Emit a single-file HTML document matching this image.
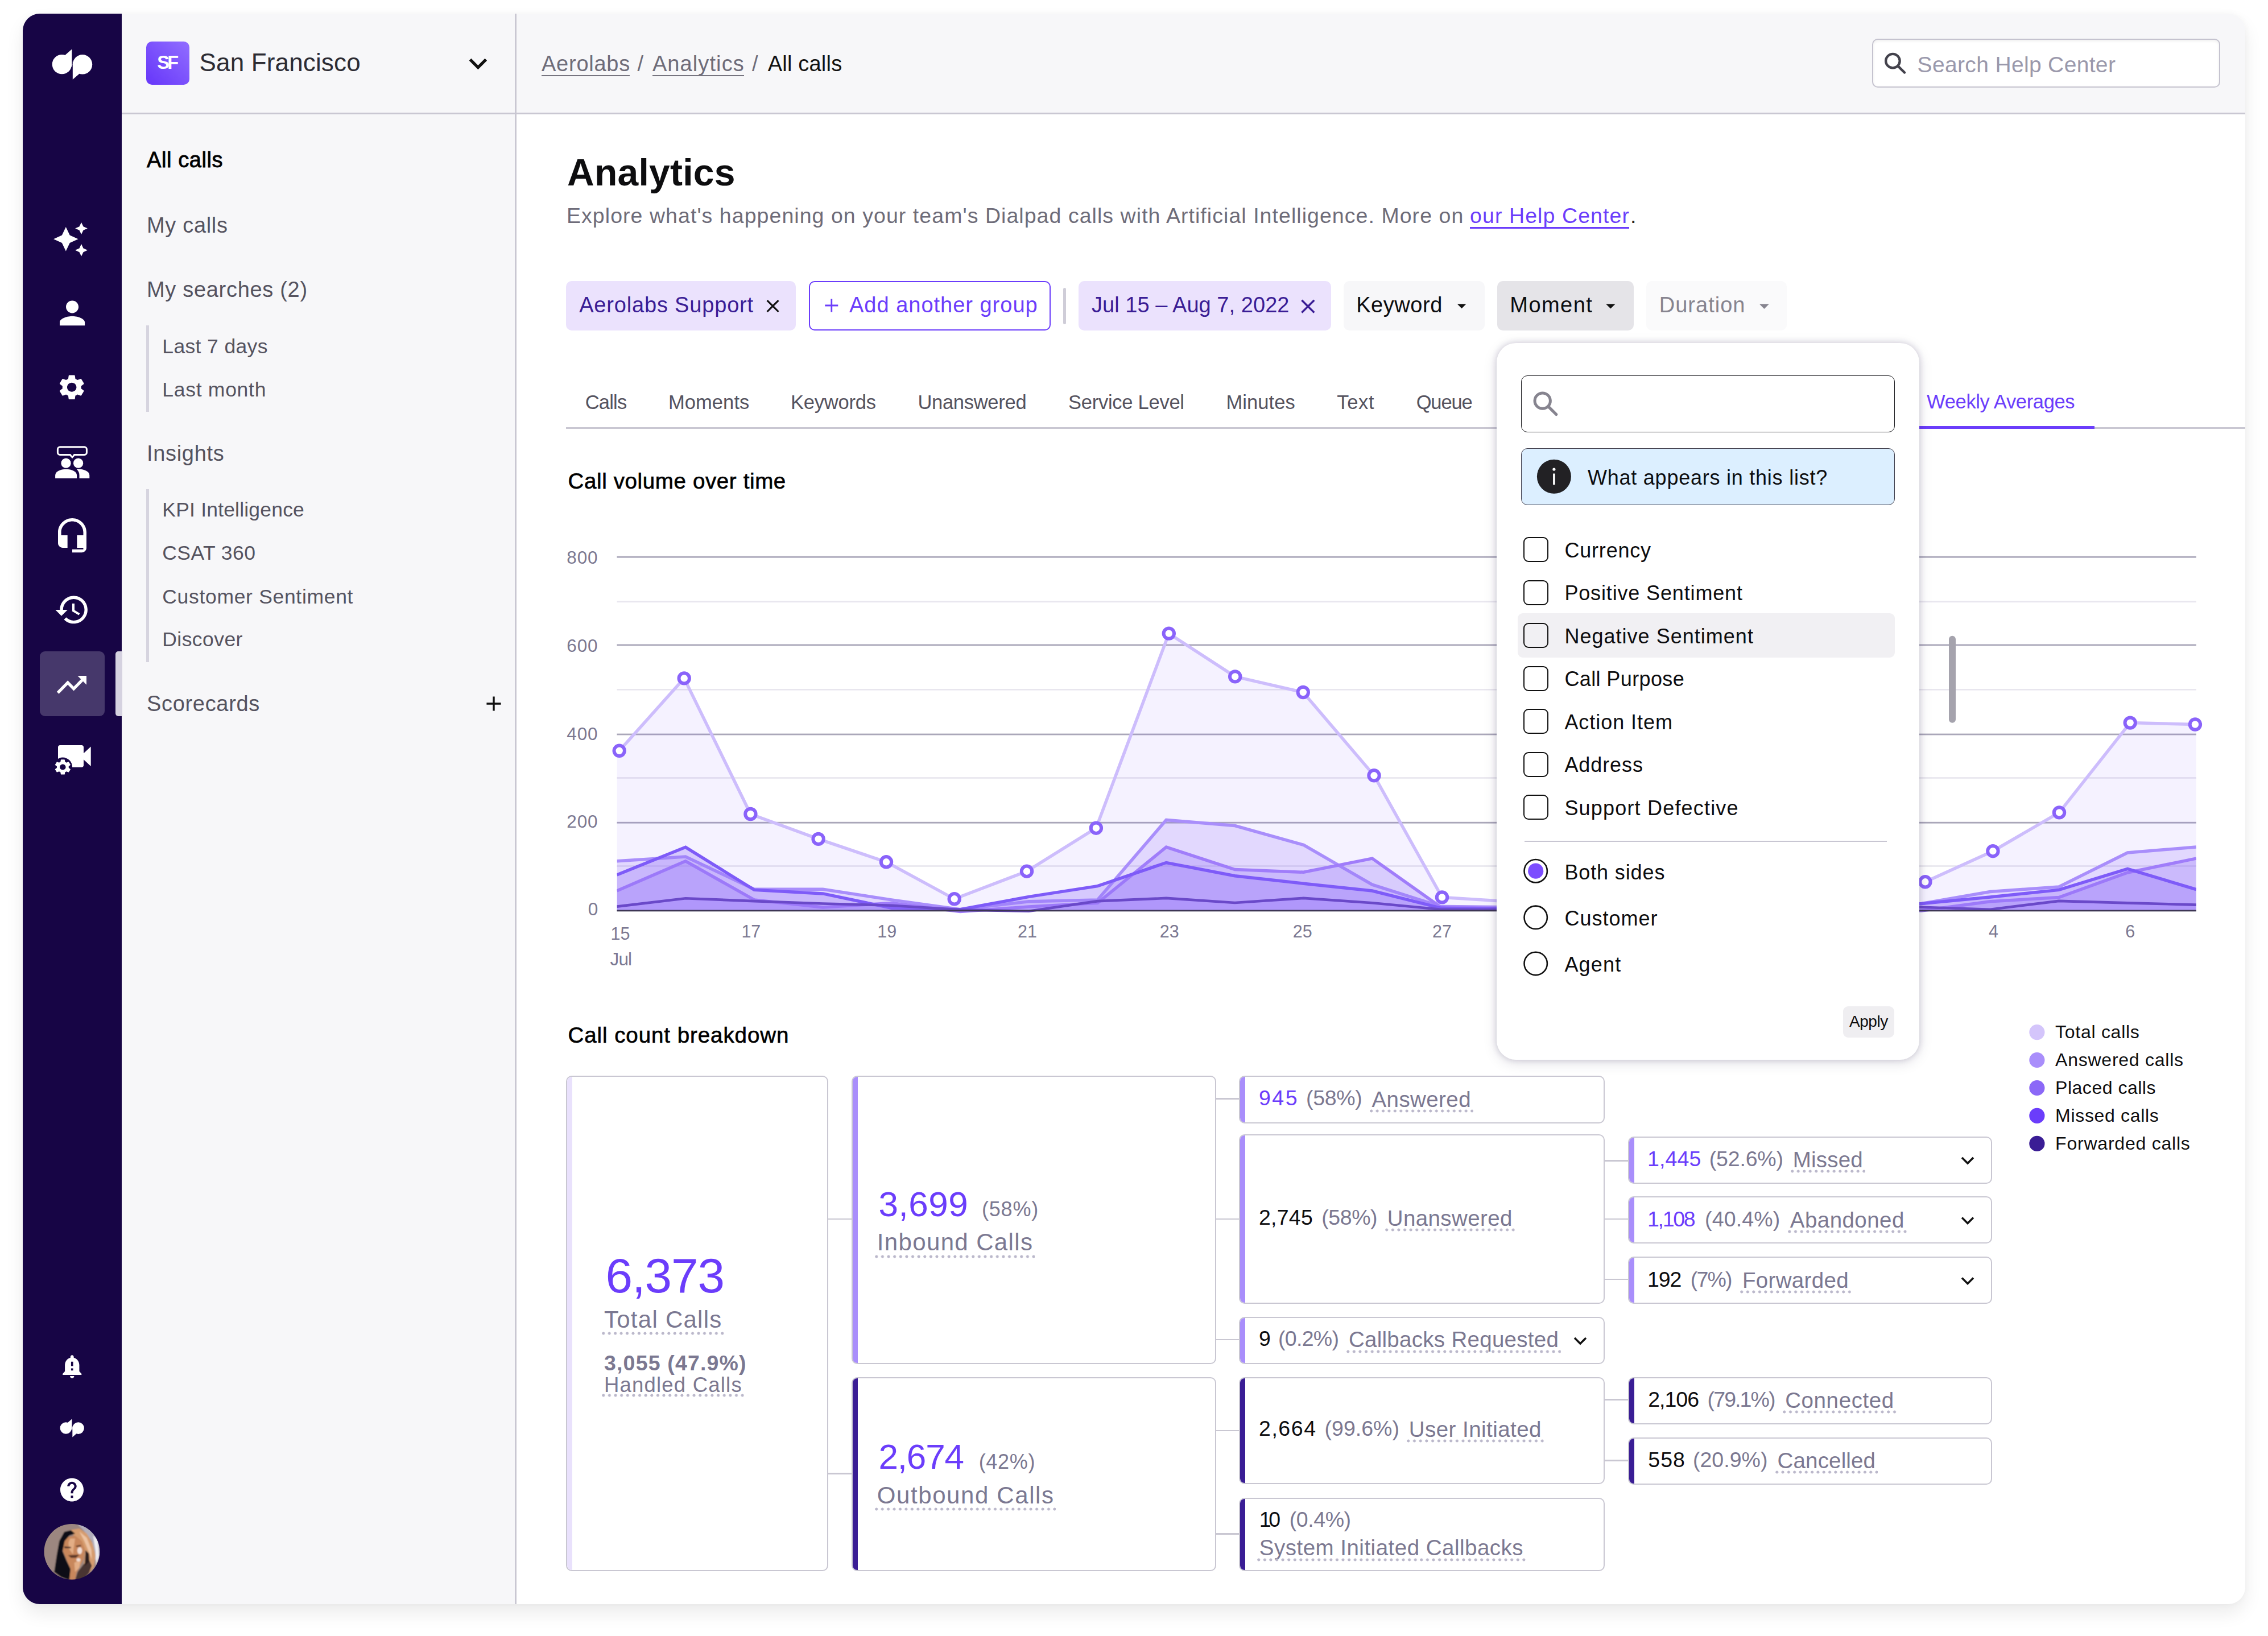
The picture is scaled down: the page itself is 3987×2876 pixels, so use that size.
<!DOCTYPE html>
<html><head><meta charset="utf-8"><title>Analytics</title>
<style>
html,body{margin:0;padding:0}
body{width:3987px;height:2876px;position:relative;overflow:hidden;background:#fff;font-family:"Liberation Sans", sans-serif;}

</style></head><body>
<div style="position:absolute;left:40px;top:24px;width:3907px;height:2796px;border-radius:30px;box-shadow:0 16px 32px rgba(0,0,0,.08),0 0 12px rgba(0,0,0,.035);background:#fff"></div>
<div id="win" style="position:absolute;left:0;top:0;width:3987px;height:2876px;clip-path:inset(24px 40px 56px 40px round 30px)">
<div style="position:absolute;left:40.0px;top:24.0px;width:174.0px;height:2796.0px;background:#170545"></div>
<div style="position:absolute;left:214.0px;top:24.0px;width:692.0px;height:2796.0px;background:#f7f7f9"></div>
<div style="position:absolute;left:906.0px;top:24.0px;width:3041.0px;height:175.0px;background:#f7f7f9"></div>
<div style="position:absolute;left:214.0px;top:198.2px;width:3733.0px;height:2.5px;background:#c9c7d2"></div>
<div style="position:absolute;left:905.4px;top:24.0px;width:2.5px;height:2796.0px;background:#c9c7d2"></div>
<div style="position:absolute;left:70.2px;top:1144.6px;width:113.6px;height:114.5px;background:#46386b;border-radius:9px"></div>
<div style="position:absolute;left:202.5px;top:1144.6px;width:12.0px;height:114.5px;background:#d5d2e0;border-radius:5px 0 0 5px"></div>
<div style="position:absolute;left:257.0px;top:73.2px;width:75.9px;height:75.8px;border-radius:10px;background:linear-gradient(45deg,#6a3bfa 10%,#8f6bff 95%)"></div>
<span style="position:absolute;left:276.2px;top:93.8px;font-size:32.5px;line-height:32.5px;white-space:pre;color:#fff;font-weight:700;letter-spacing:-3.73px;">SF</span>
<span style="position:absolute;left:350.5px;top:87.6px;font-size:44px;line-height:44px;white-space:pre;color:#2c2b33;letter-spacing:0.16px;">San Francisco</span>
<span style="position:absolute;left:258.0px;top:262.3px;font-size:38px;line-height:38px;white-space:pre;color:#000;letter-spacing:0.59px;-webkit-text-stroke:0.85px #000;">All calls</span>
<span style="position:absolute;left:258.0px;top:376.5px;font-size:38px;line-height:38px;white-space:pre;color:#55535f;letter-spacing:0.68px;">My calls</span>
<span style="position:absolute;left:258.0px;top:490.3px;font-size:38px;line-height:38px;white-space:pre;color:#55535f;letter-spacing:0.69px;">My searches (2)</span>
<div style="position:absolute;left:257.2px;top:572.3px;width:5.2px;height:152.0px;background:#d6d4df"></div>
<span style="position:absolute;left:285.3px;top:591.6px;font-size:35.5px;line-height:35.5px;white-space:pre;color:#55535f;letter-spacing:0.36px;">Last 7 days</span>
<span style="position:absolute;left:285.3px;top:667.9px;font-size:35.5px;line-height:35.5px;white-space:pre;color:#55535f;letter-spacing:0.72px;">Last month</span>
<span style="position:absolute;left:258.0px;top:778.0px;font-size:38px;line-height:38px;white-space:pre;color:#55535f;letter-spacing:0.68px;">Insights</span>
<div style="position:absolute;left:257.2px;top:860.0px;width:5.2px;height:303.8px;background:#d6d4df"></div>
<span style="position:absolute;left:285.3px;top:879.3px;font-size:35.5px;line-height:35.5px;white-space:pre;color:#55535f;letter-spacing:0.19px;">KPI Intelligence</span>
<span style="position:absolute;left:285.3px;top:955.2px;font-size:35.5px;line-height:35.5px;white-space:pre;color:#55535f;letter-spacing:0.44px;">CSAT 360</span>
<span style="position:absolute;left:285.3px;top:1031.5px;font-size:35.5px;line-height:35.5px;white-space:pre;color:#55535f;letter-spacing:0.68px;">Customer Sentiment</span>
<span style="position:absolute;left:285.3px;top:1107.3px;font-size:35.5px;line-height:35.5px;white-space:pre;color:#55535f;letter-spacing:0.43px;">Discover</span>
<span style="position:absolute;left:258.0px;top:1217.6px;font-size:38px;line-height:38px;white-space:pre;color:#55535f;letter-spacing:0.68px;">Scorecards</span>
<span style="position:absolute;left:952.0px;top:92.6px;font-size:38px;line-height:38px;white-space:pre;color:#6e6c79;letter-spacing:0.75px;">Aerolabs</span>
<div style="position:absolute;left:952.0px;top:131.6px;width:155.2px;height:2.6px;background:#76747f"></div>
<span style="position:absolute;left:1120.5px;top:92.6px;font-size:38px;line-height:38px;white-space:pre;color:#6e6c79;">/</span>
<span style="position:absolute;left:1146.9px;top:92.6px;font-size:38px;line-height:38px;white-space:pre;color:#6e6c79;letter-spacing:1.10px;">Analytics</span>
<div style="position:absolute;left:1146.9px;top:131.6px;width:160.9px;height:2.6px;background:#76747f"></div>
<span style="position:absolute;left:1322.0px;top:92.6px;font-size:38px;line-height:38px;white-space:pre;color:#6e6c79;">/</span>
<span style="position:absolute;left:1349.7px;top:92.6px;font-size:38px;line-height:38px;white-space:pre;color:#111;letter-spacing:0.21px;">All calls</span>
<div style="position:absolute;left:3291.0px;top:68.0px;width:612.0px;height:85.5px;box-sizing:border-box;border:2.4px solid #c5c3cf;border-radius:10px;background:#fff;box-shadow:inset 0 2px 5px rgba(0,0,0,.07)"></div>
<span style="position:absolute;left:3370.6px;top:94.0px;font-size:39px;line-height:39px;white-space:pre;color:#9a98ab;letter-spacing:0.34px;">Search Help Center</span>
<span style="position:absolute;left:997.0px;top:269.5px;font-size:66px;line-height:66px;white-space:pre;color:#0d0d0f;font-weight:700;letter-spacing:0.24px;">Analytics</span>
<span style="position:absolute;left:996.0px;top:360.7px;font-size:37.5px;line-height:37.5px;white-space:pre;color:#6e6c79;letter-spacing:1.05px;">Explore what&#x27;s happening on your team&#x27;s Dialpad calls with Artificial Intelligence. More on </span>
<span style="position:absolute;left:2584.0px;top:360.7px;font-size:37.5px;line-height:37.5px;white-space:pre;color:#6b3dfb;letter-spacing:1.09px;">our Help Center</span>
<div style="position:absolute;left:2584.0px;top:399.0px;width:280.0px;height:2.6px;background:#6b3dfb"></div>
<span style="position:absolute;left:2866.0px;top:360.7px;font-size:37.5px;line-height:37.5px;white-space:pre;color:#222;">.</span>
<div style="position:absolute;left:995.2px;top:494.3px;width:403.9px;height:86.8px;background:#ebe2fd;border-radius:10px"></div>
<span style="position:absolute;left:1018.2px;top:517.4px;font-size:38px;line-height:38px;white-space:pre;color:#3a1d95;letter-spacing:0.82px;">Aerolabs Support</span>
<div style="position:absolute;left:1421.6px;top:494.3px;width:425.0px;height:86.8px;box-sizing:border-box;border:2.8px solid #6b3dfb;border-radius:10px;background:#fff"></div>
<span style="position:absolute;left:1493.0px;top:517.4px;font-size:38px;line-height:38px;white-space:pre;color:#6b3dfb;letter-spacing:0.99px;">Add another group</span>
<div style="position:absolute;left:1868.7px;top:506.2px;width:5.0px;height:63.5px;background:#cfcdd8;border-radius:3px"></div>
<div style="position:absolute;left:1896.1px;top:494.3px;width:444.0px;height:86.8px;background:#ebe2fd;border-radius:10px"></div>
<span style="position:absolute;left:1919.0px;top:517.4px;font-size:38px;line-height:38px;white-space:pre;color:#3a1d95;letter-spacing:0.05px;">Jul 15 – Aug 7, 2022</span>
<div style="position:absolute;left:2362.2px;top:494.3px;width:248.2px;height:86.8px;background:#f7f7f9;border-radius:10px"></div>
<span style="position:absolute;left:2384.2px;top:517.4px;font-size:38px;line-height:38px;white-space:pre;color:#0d0d0f;letter-spacing:0.56px;">Keyword</span>
<div style="position:absolute;left:2631.8px;top:494.3px;width:239.9px;height:86.8px;background:#e5e4e8;border-radius:10px"></div>
<span style="position:absolute;left:2654.3px;top:517.4px;font-size:38px;line-height:38px;white-space:pre;color:#0d0d0f;letter-spacing:1.46px;">Moment</span>
<div style="position:absolute;left:2893.7px;top:494.3px;width:247.8px;height:86.8px;background:#fafafb;border-radius:10px"></div>
<span style="position:absolute;left:2916.7px;top:517.4px;font-size:38px;line-height:38px;white-space:pre;color:#86848f;letter-spacing:1.02px;">Duration</span>
<span style="position:absolute;left:1028.7px;top:689.5px;font-size:34.5px;line-height:34.5px;white-space:pre;color:#55535f;letter-spacing:-0.80px;">Calls</span>
<span style="position:absolute;left:1174.9px;top:689.5px;font-size:34.5px;line-height:34.5px;white-space:pre;color:#55535f;letter-spacing:0.09px;">Moments</span>
<span style="position:absolute;left:1390.0px;top:689.5px;font-size:34.5px;line-height:34.5px;white-space:pre;color:#55535f;letter-spacing:-0.21px;">Keywords</span>
<span style="position:absolute;left:1613.4px;top:689.5px;font-size:34.5px;line-height:34.5px;white-space:pre;color:#55535f;letter-spacing:-0.28px;">Unanswered</span>
<span style="position:absolute;left:1878.0px;top:689.5px;font-size:34.5px;line-height:34.5px;white-space:pre;color:#55535f;letter-spacing:-0.26px;">Service Level</span>
<span style="position:absolute;left:2155.4px;top:689.5px;font-size:34.5px;line-height:34.5px;white-space:pre;color:#55535f;letter-spacing:0.10px;">Minutes</span>
<span style="position:absolute;left:2350.3px;top:689.5px;font-size:34.5px;line-height:34.5px;white-space:pre;color:#55535f;letter-spacing:0.64px;">Text</span>
<span style="position:absolute;left:2489.7px;top:689.5px;font-size:34.5px;line-height:34.5px;white-space:pre;color:#55535f;letter-spacing:-1.15px;">Queue</span>
<span style="position:absolute;left:3387.1px;top:688.6px;font-size:34.5px;line-height:34.5px;white-space:pre;color:#6b3dfb;letter-spacing:-0.34px;">Weekly Averages</span>
<div style="position:absolute;left:995.0px;top:751.4px;width:2952.0px;height:2.8px;background:#c9c7d2"></div>
<div style="position:absolute;left:3370.0px;top:748.6px;width:311.8px;height:5.7px;background:#6b3dfb"></div>
<span style="position:absolute;left:998.5px;top:826.8px;font-size:38.5px;line-height:38.5px;white-space:pre;color:#000;letter-spacing:0.63px;-webkit-text-stroke:0.65px #000;">Call volume over time</span>
<span style="position:absolute;left:996.3px;top:965.0px;font-size:31.5px;line-height:31.5px;white-space:pre;color:#7b7891;letter-spacing:0.82px;">800</span>
<span style="position:absolute;left:996.3px;top:1119.8px;font-size:31.5px;line-height:31.5px;white-space:pre;color:#7b7891;letter-spacing:0.82px;">600</span>
<span style="position:absolute;left:996.3px;top:1275.0px;font-size:31.5px;line-height:31.5px;white-space:pre;color:#7b7891;letter-spacing:0.82px;">400</span>
<span style="position:absolute;left:996.3px;top:1429.3px;font-size:31.5px;line-height:31.5px;white-space:pre;color:#7b7891;letter-spacing:0.82px;">200</span>
<span style="position:absolute;left:1033.8px;top:1583.3px;font-size:31.5px;line-height:31.5px;white-space:pre;color:#7b7891;">0</span>
<span style="position:absolute;left:1073.6px;top:1625.7px;font-size:30.5px;line-height:30.5px;white-space:pre;color:#7b7891;">15</span>
<span style="position:absolute;left:1072.6px;top:1670.5px;font-size:31.5px;line-height:31.5px;white-space:pre;color:#7b7891;letter-spacing:-0.94px;">Jul</span>
<span style="position:absolute;left:1303.4px;top:1622.4px;font-size:30.5px;line-height:30.5px;white-space:pre;color:#7b7891;">17</span>
<span style="position:absolute;left:1542.3px;top:1622.4px;font-size:30.5px;line-height:30.5px;white-space:pre;color:#7b7891;">19</span>
<span style="position:absolute;left:1789.0px;top:1622.4px;font-size:30.5px;line-height:30.5px;white-space:pre;color:#7b7891;">21</span>
<span style="position:absolute;left:2038.7px;top:1622.4px;font-size:30.5px;line-height:30.5px;white-space:pre;color:#7b7891;">23</span>
<span style="position:absolute;left:2272.7px;top:1622.4px;font-size:30.5px;line-height:30.5px;white-space:pre;color:#7b7891;">25</span>
<span style="position:absolute;left:2518.0px;top:1622.4px;font-size:30.5px;line-height:30.5px;white-space:pre;color:#7b7891;">27</span>
<span style="position:absolute;left:2758.0px;top:1622.4px;font-size:30.5px;line-height:30.5px;white-space:pre;color:#7b7891;">29</span>
<span style="position:absolute;left:2998.0px;top:1622.4px;font-size:30.5px;line-height:30.5px;white-space:pre;color:#7b7891;">31</span>
<span style="position:absolute;left:3251.5px;top:1622.4px;font-size:30.5px;line-height:30.5px;white-space:pre;color:#7b7891;">2</span>
<span style="position:absolute;left:3496.1px;top:1622.4px;font-size:30.5px;line-height:30.5px;white-space:pre;color:#7b7891;">4</span>
<span style="position:absolute;left:3736.2px;top:1622.4px;font-size:30.5px;line-height:30.5px;white-space:pre;color:#7b7891;">6</span>
<span style="position:absolute;left:3613.1px;top:1797.9px;font-size:32px;line-height:32px;white-space:pre;color:#0d0d0f;letter-spacing:0.72px;">Total calls</span>
<span style="position:absolute;left:3613.1px;top:1846.9px;font-size:32px;line-height:32px;white-space:pre;color:#0d0d0f;letter-spacing:0.75px;">Answered calls</span>
<span style="position:absolute;left:3613.1px;top:1895.8px;font-size:32px;line-height:32px;white-space:pre;color:#0d0d0f;letter-spacing:0.51px;">Placed calls</span>
<span style="position:absolute;left:3613.1px;top:1944.8px;font-size:32px;line-height:32px;white-space:pre;color:#0d0d0f;letter-spacing:0.68px;">Missed calls</span>
<span style="position:absolute;left:3613.1px;top:1993.7px;font-size:32px;line-height:32px;white-space:pre;color:#0d0d0f;letter-spacing:0.78px;">Forwarded calls</span>
<span style="position:absolute;left:998.5px;top:1801.2px;font-size:38.5px;line-height:38.5px;white-space:pre;color:#000;letter-spacing:0.93px;-webkit-text-stroke:0.65px #000;">Call count breakdown</span>
<div style="position:absolute;left:995.4px;top:1891.0px;width:461.1px;height:871.0px;box-sizing:border-box;border:2.6px solid #c9c7d2;border-radius:10px;background:#fff;overflow:hidden"><div style="position:absolute;left:0;top:0;bottom:0;width:8.5px;background:#e9e1fc"></div></div>
<div style="position:absolute;left:1497.0px;top:1891.0px;width:640.5px;height:507.0px;box-sizing:border-box;border:2.6px solid #c9c7d2;border-radius:10px;background:#fff;overflow:hidden"><div style="position:absolute;left:0;top:0;bottom:0;width:8.5px;background:#a98efb"></div></div>
<div style="position:absolute;left:1497.0px;top:2420.8px;width:640.5px;height:341.2px;box-sizing:border-box;border:2.6px solid #c9c7d2;border-radius:10px;background:#fff;overflow:hidden"><div style="position:absolute;left:0;top:0;bottom:0;width:8.5px;background:#3a1d95"></div></div>
<div style="position:absolute;left:1456.0px;top:2141.6px;width:42.0px;height:2.6px;background:#c9c7d2"></div>
<div style="position:absolute;left:1456.0px;top:2589.4px;width:42.0px;height:2.6px;background:#c9c7d2"></div>
<div style="position:absolute;left:2178.0px;top:1891.0px;width:643.3px;height:84.0px;box-sizing:border-box;border:2.6px solid #c9c7d2;border-radius:10px;background:#fff;overflow:hidden"><div style="position:absolute;left:0;top:0;bottom:0;width:8.5px;background:#a98efb"></div></div>
<div style="position:absolute;left:2178.0px;top:1994.0px;width:643.3px;height:298.0px;box-sizing:border-box;border:2.6px solid #c9c7d2;border-radius:10px;background:#fff;overflow:hidden"><div style="position:absolute;left:0;top:0;bottom:0;width:8.5px;background:#a98efb"></div></div>
<div style="position:absolute;left:2178.0px;top:2314.5px;width:643.3px;height:83.7px;box-sizing:border-box;border:2.6px solid #c9c7d2;border-radius:10px;background:#fff;overflow:hidden"><div style="position:absolute;left:0;top:0;bottom:0;width:8.5px;background:#a98efb"></div></div>
<div style="position:absolute;left:2178.0px;top:2420.8px;width:643.3px;height:188.7px;box-sizing:border-box;border:2.6px solid #c9c7d2;border-radius:10px;background:#fff;overflow:hidden"><div style="position:absolute;left:0;top:0;bottom:0;width:8.5px;background:#3a1d95"></div></div>
<div style="position:absolute;left:2178.0px;top:2632.8px;width:643.3px;height:129.2px;box-sizing:border-box;border:2.6px solid #c9c7d2;border-radius:10px;background:#fff;overflow:hidden"><div style="position:absolute;left:0;top:0;bottom:0;width:8.5px;background:#3a1d95"></div></div>
<div style="position:absolute;left:2137.0px;top:1930.3px;width:42.0px;height:2.6px;background:#c9c7d2"></div>
<div style="position:absolute;left:2137.0px;top:2141.9px;width:42.0px;height:2.6px;background:#c9c7d2"></div>
<div style="position:absolute;left:2137.0px;top:2353.6px;width:42.0px;height:2.6px;background:#c9c7d2"></div>
<div style="position:absolute;left:2137.0px;top:2513.7px;width:42.0px;height:2.6px;background:#c9c7d2"></div>
<div style="position:absolute;left:2137.0px;top:2695.3px;width:42.0px;height:2.6px;background:#c9c7d2"></div>
<div style="position:absolute;left:2862.3px;top:1997.8px;width:640.0px;height:83.0px;box-sizing:border-box;border:2.6px solid #c9c7d2;border-radius:10px;background:#fff;overflow:hidden"><div style="position:absolute;left:0;top:0;bottom:0;width:8.5px;background:#a98efb"></div></div>
<div style="position:absolute;left:2862.3px;top:2102.8px;width:640.0px;height:83.7px;box-sizing:border-box;border:2.6px solid #c9c7d2;border-radius:10px;background:#fff;overflow:hidden"><div style="position:absolute;left:0;top:0;bottom:0;width:8.5px;background:#a98efb"></div></div>
<div style="position:absolute;left:2862.3px;top:2208.6px;width:640.0px;height:83.8px;box-sizing:border-box;border:2.6px solid #c9c7d2;border-radius:10px;background:#fff;overflow:hidden"><div style="position:absolute;left:0;top:0;bottom:0;width:8.5px;background:#a98efb"></div></div>
<div style="position:absolute;left:2862.3px;top:2420.8px;width:640.0px;height:83.4px;box-sizing:border-box;border:2.6px solid #c9c7d2;border-radius:10px;background:#fff;overflow:hidden"><div style="position:absolute;left:0;top:0;bottom:0;width:8.5px;background:#3a1d95"></div></div>
<div style="position:absolute;left:2862.3px;top:2527.0px;width:640.0px;height:82.5px;box-sizing:border-box;border:2.6px solid #c9c7d2;border-radius:10px;background:#fff;overflow:hidden"><div style="position:absolute;left:0;top:0;bottom:0;width:8.5px;background:#3a1d95"></div></div>
<div style="position:absolute;left:2821.0px;top:2039.2px;width:42.0px;height:2.6px;background:#c9c7d2"></div>
<div style="position:absolute;left:2821.0px;top:2141.9px;width:42.0px;height:2.6px;background:#c9c7d2"></div>
<div style="position:absolute;left:2821.0px;top:2247.7px;width:42.0px;height:2.6px;background:#c9c7d2"></div>
<div style="position:absolute;left:2821.0px;top:2459.4px;width:42.0px;height:2.6px;background:#c9c7d2"></div>
<div style="position:absolute;left:2821.0px;top:2566.1px;width:42.0px;height:2.6px;background:#c9c7d2"></div>
<span style="position:absolute;left:1064.6px;top:2199.8px;font-size:85.5px;line-height:85.5px;white-space:pre;color:#6b3dfb;letter-spacing:-1.14px;">6,373</span>
<span style="position:absolute;left:1062.0px;top:2299.0px;font-size:42px;line-height:42px;white-space:pre;color:#7b7891;letter-spacing:1.25px;">Total Calls</span>
<div style="position:absolute;left:1058.0px;top:2341.4px;width:214.8px;height:6.0px;background:radial-gradient(circle at 2.75px 50%,#bbb8cb 2.15px,transparent 2.85px) 0 0/10.465px 100% repeat-x"></div>
<span style="position:absolute;left:1062.0px;top:2377.5px;font-size:37.5px;line-height:37.5px;white-space:pre;color:#7b7891;font-weight:700;letter-spacing:1.17px;">3,055 (47.9%)</span>
<span style="position:absolute;left:1062.0px;top:2416.5px;font-size:36.5px;line-height:36.5px;white-space:pre;color:#7b7891;letter-spacing:1.20px;">Handled Calls</span>
<div style="position:absolute;left:1058.0px;top:2449.8px;width:250.1px;height:6.0px;background:radial-gradient(circle at 2.75px 50%,#bbb8cb 2.15px,transparent 2.85px) 0 0/10.635px 100% repeat-x"></div>
<span style="position:absolute;left:1544.4px;top:2085.5px;font-size:62px;line-height:62px;white-space:pre;color:#6b3dfb;letter-spacing:0.56px;">3,699</span>
<span style="position:absolute;left:1726.0px;top:2107.5px;font-size:36px;line-height:36px;white-space:pre;color:#7b7891;letter-spacing:0.79px;">(58%)</span>
<span style="position:absolute;left:1541.7px;top:2163.4px;font-size:42px;line-height:42px;white-space:pre;color:#7b7891;letter-spacing:1.37px;">Inbound Calls</span>
<div style="position:absolute;left:1537.7px;top:2205.6px;width:281.8px;height:6.0px;background:radial-gradient(circle at 2.75px 50%,#bbb8cb 2.15px,transparent 2.85px) 0 0/10.627px 100% repeat-x"></div>
<span style="position:absolute;left:1544.4px;top:2530.2px;font-size:62px;line-height:62px;white-space:pre;color:#6b3dfb;letter-spacing:-1.14px;">2,674</span>
<span style="position:absolute;left:1720.7px;top:2552.2px;font-size:36px;line-height:36px;white-space:pre;color:#7b7891;letter-spacing:0.69px;">(42%)</span>
<span style="position:absolute;left:1541.7px;top:2608.1px;font-size:42px;line-height:42px;white-space:pre;color:#7b7891;letter-spacing:1.60px;">Outbound Calls</span>
<div style="position:absolute;left:1537.7px;top:2650.3px;width:318.8px;height:6.0px;background:radial-gradient(circle at 2.75px 50%,#bbb8cb 2.15px,transparent 2.85px) 0 0/10.443px 100% repeat-x"></div>
<span style="position:absolute;left:2213.0px;top:1912.2px;font-size:37.5px;line-height:37.5px;white-space:pre;color:#6b3dfb;letter-spacing:2.46px;">945</span>
<span style="position:absolute;left:2296.0px;top:1912.2px;font-size:37.5px;line-height:37.5px;white-space:pre;color:#7b7891;letter-spacing:-0.33px;">(58%)</span>
<span style="position:absolute;left:2411.5px;top:1913.5px;font-size:38.5px;line-height:38.5px;white-space:pre;color:#7b7891;letter-spacing:0.41px;">Answered</span>
<div style="position:absolute;left:2407.5px;top:1949.7px;width:182.6px;height:6.0px;background:radial-gradient(circle at 2.75px 50%,#bbb8cb 2.15px,transparent 2.85px) 0 0/10.418px 100% repeat-x"></div>
<span style="position:absolute;left:2213.0px;top:2121.7px;font-size:37.5px;line-height:37.5px;white-space:pre;color:#0d0d0f;letter-spacing:0.24px;">2,745</span>
<span style="position:absolute;left:2323.3px;top:2121.7px;font-size:37.5px;line-height:37.5px;white-space:pre;color:#7b7891;letter-spacing:-0.43px;">(58%)</span>
<span style="position:absolute;left:2438.8px;top:2123.0px;font-size:38.5px;line-height:38.5px;white-space:pre;color:#7b7891;letter-spacing:0.38px;">Unanswered</span>
<div style="position:absolute;left:2434.8px;top:2159.2px;width:228.1px;height:6.0px;background:radial-gradient(circle at 2.75px 50%,#bbb8cb 2.15px,transparent 2.85px) 0 0/10.600px 100% repeat-x"></div>
<span style="position:absolute;left:2213.0px;top:2335.1px;font-size:37.5px;line-height:37.5px;white-space:pre;color:#0d0d0f;">9</span>
<span style="position:absolute;left:2247.0px;top:2335.1px;font-size:37.5px;line-height:37.5px;white-space:pre;color:#7b7891;letter-spacing:-0.69px;">(0.2%)</span>
<span style="position:absolute;left:2370.9px;top:2336.4px;font-size:38.5px;line-height:38.5px;white-space:pre;color:#7b7891;letter-spacing:0.29px;">Callbacks Requested</span>
<div style="position:absolute;left:2366.9px;top:2372.6px;width:377.5px;height:6.0px;background:radial-gradient(circle at 2.75px 50%,#bbb8cb 2.15px,transparent 2.85px) 0 0/10.629px 100% repeat-x"></div>
<span style="position:absolute;left:2213.0px;top:2492.9px;font-size:37.5px;line-height:37.5px;white-space:pre;color:#0d0d0f;letter-spacing:1.54px;">2,664</span>
<span style="position:absolute;left:2328.6px;top:2492.9px;font-size:37.5px;line-height:37.5px;white-space:pre;color:#7b7891;letter-spacing:0.01px;">(99.6%)</span>
<span style="position:absolute;left:2476.7px;top:2494.2px;font-size:38.5px;line-height:38.5px;white-space:pre;color:#7b7891;letter-spacing:0.46px;">User Initiated</span>
<div style="position:absolute;left:2472.7px;top:2530.4px;width:241.3px;height:6.0px;background:radial-gradient(circle at 2.75px 50%,#bbb8cb 2.15px,transparent 2.85px) 0 0/10.718px 100% repeat-x"></div>
<span style="position:absolute;left:2213.8px;top:2652.5px;font-size:37.5px;line-height:37.5px;white-space:pre;color:#0d0d0f;letter-spacing:-4.32px;">10</span>
<span style="position:absolute;left:2266.7px;top:2652.5px;font-size:37.5px;line-height:37.5px;white-space:pre;color:#7b7891;letter-spacing:-0.41px;">(0.4%)</span>
<span style="position:absolute;left:2213.8px;top:2702.4px;font-size:38.5px;line-height:38.5px;white-space:pre;color:#7b7891;letter-spacing:0.49px;">System Initiated Callbacks</span>
<div style="position:absolute;left:2209.8px;top:2738.6px;width:472.3px;height:6.0px;background:radial-gradient(circle at 2.75px 50%,#bbb8cb 2.15px,transparent 2.85px) 0 0/10.609px 100% repeat-x"></div>
<span style="position:absolute;left:2896.0px;top:2018.8px;font-size:37.5px;line-height:37.5px;white-space:pre;color:#6b3dfb;letter-spacing:0.11px;">1,445</span>
<span style="position:absolute;left:3004.8px;top:2018.8px;font-size:37.5px;line-height:37.5px;white-space:pre;color:#7b7891;letter-spacing:-0.19px;">(52.6%)</span>
<span style="position:absolute;left:3151.7px;top:2020.1px;font-size:38.5px;line-height:38.5px;white-space:pre;color:#7b7891;letter-spacing:0.21px;">Missed</span>
<div style="position:absolute;left:3147.7px;top:2056.3px;width:131.5px;height:6.0px;background:radial-gradient(circle at 2.75px 50%,#bbb8cb 2.15px,transparent 2.85px) 0 0/10.500px 100% repeat-x"></div>
<span style="position:absolute;left:2896.0px;top:2124.6px;font-size:37.5px;line-height:37.5px;white-space:pre;color:#6b3dfb;letter-spacing:-2.31px;">1,108</span>
<span style="position:absolute;left:2997.0px;top:2124.6px;font-size:37.5px;line-height:37.5px;white-space:pre;color:#7b7891;letter-spacing:0.15px;">(40.4%)</span>
<span style="position:absolute;left:3146.8px;top:2125.9px;font-size:38.5px;line-height:38.5px;white-space:pre;color:#7b7891;letter-spacing:0.45px;">Abandoned</span>
<div style="position:absolute;left:3142.8px;top:2162.1px;width:209.1px;height:6.0px;background:radial-gradient(circle at 2.75px 50%,#bbb8cb 2.15px,transparent 2.85px) 0 0/10.716px 100% repeat-x"></div>
<span style="position:absolute;left:2896.0px;top:2230.5px;font-size:37.5px;line-height:37.5px;white-space:pre;color:#0d0d0f;letter-spacing:-1.14px;">192</span>
<span style="position:absolute;left:2971.8px;top:2230.5px;font-size:37.5px;line-height:37.5px;white-space:pre;color:#7b7891;letter-spacing:-1.86px;">(7%)</span>
<span style="position:absolute;left:3063.0px;top:2231.8px;font-size:38.5px;line-height:38.5px;white-space:pre;color:#7b7891;letter-spacing:0.32px;">Forwarded</span>
<div style="position:absolute;left:3059.0px;top:2268.0px;width:195.1px;height:6.0px;background:radial-gradient(circle at 2.75px 50%,#bbb8cb 2.15px,transparent 2.85px) 0 0/10.533px 100% repeat-x"></div>
<span style="position:absolute;left:2897.2px;top:2441.8px;font-size:37.5px;line-height:37.5px;white-space:pre;color:#0d0d0f;letter-spacing:-1.01px;">2,106</span>
<span style="position:absolute;left:3001.6px;top:2441.8px;font-size:37.5px;line-height:37.5px;white-space:pre;color:#7b7891;letter-spacing:-1.90px;">(79.1%)</span>
<span style="position:absolute;left:3138.2px;top:2443.1px;font-size:38.5px;line-height:38.5px;white-space:pre;color:#7b7891;letter-spacing:0.60px;">Connected</span>
<div style="position:absolute;left:3134.2px;top:2479.3px;width:199.5px;height:6.0px;background:radial-gradient(circle at 2.75px 50%,#bbb8cb 2.15px,transparent 2.85px) 0 0/10.778px 100% repeat-x"></div>
<span style="position:absolute;left:2897.2px;top:2547.6px;font-size:37.5px;line-height:37.5px;white-space:pre;color:#0d0d0f;letter-spacing:1.11px;">558</span>
<span style="position:absolute;left:2976.0px;top:2547.6px;font-size:37.5px;line-height:37.5px;white-space:pre;color:#7b7891;letter-spacing:0.01px;">(20.9%)</span>
<span style="position:absolute;left:3124.6px;top:2548.9px;font-size:38.5px;line-height:38.5px;white-space:pre;color:#7b7891;letter-spacing:0.15px;">Cancelled</span>
<div style="position:absolute;left:3120.6px;top:2585.1px;width:180.9px;height:6.0px;background:radial-gradient(circle at 2.75px 50%,#bbb8cb 2.15px,transparent 2.85px) 0 0/10.318px 100% repeat-x"></div>
<svg style="position:absolute;left:0;top:0" width="3987" height="2876" viewBox="0 0 3987 2876"><circle cx="108.9" cy="113.1" r="17.2" fill="#fff"/><circle cx="145.0" cy="113.3" r="17.2" fill="#fff"/><polygon points="126.3,86.4 126.3,118.0 112.0,99.0" fill="#fff"/><polygon points="127.8,139.8 127.8,108.0 142.0,127.5" fill="#fff"/>
<polygon points="115.8,399.1 122.7,413.6 137.5,420.3 122.7,427.0 115.8,441.5 108.9,427.0 94.1,420.3 108.9,413.6" fill="#fff"/>
<polygon points="143.0,391.0 146.5,398.2 153.9,401.5 146.5,404.8 143.0,412.0 139.5,404.8 132.1,401.5 139.5,398.2" fill="#fff"/>
<polygon points="143.0,429.1 146.5,436.4 153.9,439.8 146.5,443.2 143.0,450.5 139.5,443.2 132.1,439.8 139.5,436.4" fill="#fff"/>
<g transform="translate(93.97,517.70) scale(2.7562,2.7250)"><path d="M12 12c2.21 0 4-1.79 4-4s-1.79-4-4-4-4 1.79-4 4 1.79 4 4 4zm0 2c-2.67 0-8 1.34-8 4v2h16v-2c0-2.66-5.33-4-8-4z" fill="#fff"/></g>
<g transform="translate(98.75,654.16) scale(2.2872,2.2200)"><path d="M19.14 12.94c.04-.3.06-.61.06-.94 0-.32-.02-.64-.07-.94l2.03-1.58c.18-.14.23-.41.12-.61l-1.92-3.32c-.12-.22-.37-.29-.59-.22l-2.39.96c-.5-.38-1.03-.7-1.62-.94l-.36-2.54c-.04-.24-.24-.41-.48-.41h-3.84c-.24 0-.43.17-.47.41l-.36 2.54c-.59.24-1.13.57-1.62.94l-2.39-.96c-.22-.08-.47 0-.59.22L2.74 8.87c-.12.21-.08.47.12.61l2.03 1.58c-.05.3-.09.63-.09.94s.02.64.07.94l-2.03 1.58c-.18.14-.23.41-.12.61l1.92 3.32c.12.22.37.29.59.22l2.39-.96c.5.38 1.03.7 1.62.94l.36 2.54c.05.24.24.41.48.41h3.84c.24 0 .44-.17.47-.41l.36-2.54c.59-.24 1.13-.56 1.62-.94l2.39.96c.22.08.47 0 .59-.22l1.92-3.32c.12-.22.07-.47-.12-.61l-2.01-1.58zM12 15.6c-1.98 0-3.6-1.62-3.6-3.6s1.62-3.6 3.6-3.6 3.6 1.62 3.6 3.6-1.62 3.6-3.6 3.6z" fill="#fff"/></g>
<rect x="101.4" y="785.8" width="51" height="13.6" rx="4" fill="none" stroke="#fff" stroke-width="3"/>
<polygon points="121.5,800 132.5,800 127,806" fill="#fff"/><polygon points="123.5,797 130.5,797 127,802" fill="#180645"/>
<circle cx="116" cy="814.2" r="8.6" fill="#fff"/><circle cx="137.6" cy="814.2" r="8.6" fill="#fff"/>
<path d="M97.1 840.8v-5c0-7 9-11 19-11s19 4 19 11v5z" fill="#fff"/>
<path d="M139.5 840.8v-5.5c0-4.5-2-8-5-10.5c1-.1 2-.2 3-.2c10 0 19.800 4 19.800 11v5.200z" fill="#fff"/>
<g transform="translate(93.67,908.15) scale(2.7778,2.7455)"><path d="M12 1c-4.97 0-9 4.03-9 9v7c0 1.66 1.34 3 3 3h3v-8H5v-2c0-3.87 3.13-7 7-7s7 3.13 7 7v2h-4v8h4v1h-7v2h6c1.66 0 3-1.34 3-3V10c0-4.97-4.03-9-9-9z" fill="#fff"/></g>
<g transform="translate(94.60,1039.48) scale(2.6952,2.7056)"><path d="M13 3c-4.97 0-9 4.03-9 9H1l3.89 3.89.07.14L9 12H6c0-3.87 3.13-7 7-7s7 3.13 7 7-3.13 7-7 7c-1.93 0-3.68-.79-4.94-2.06l-1.42 1.42C8.27 19.99 10.51 21 13 21c4.97 0 9-4.03 9-9s-4.03-9-9-9zm-1 5v5l4.28 2.54.72-1.21-3.5-2.08V8H12z" fill="#fff"/></g>
<g transform="translate(94.58,1172.00) scale(2.6100,2.6500)"><path d="M16 6l2.29 2.29-4.88 4.88-4-4L2 16.59 3.41 18l6-6 4 4 6.3-6.29L22 12V6z" fill="#fff"/></g>
<path d="M102 1313.500c0-2 1.500-3.500 3.500-3.500h38c2 0 3.500 1.500 3.500 3.500v10.700l12.700-11.800v34.600l-12.700-11.800v10c0 2-1.500 3.500-3.500 3.500h-38c-2 0-3.500-1.500-3.500-3.500z" fill="#fff"/>
<circle cx="110.3" cy="1348.4" r="16.8" fill="#170545"/>
<g transform="translate(92.92,1332.07) scale(1.4521,1.3650)"><path d="M19.14 12.94c.04-.3.06-.61.06-.94 0-.32-.02-.64-.07-.94l2.03-1.58c.18-.14.23-.41.12-.61l-1.92-3.32c-.12-.22-.37-.29-.59-.22l-2.39.96c-.5-.38-1.03-.7-1.62-.94l-.36-2.54c-.04-.24-.24-.41-.48-.41h-3.84c-.24 0-.43.17-.47.41l-.36 2.54c-.59.24-1.13.57-1.62.94l-2.39-.96c-.22-.08-.47 0-.59.22L2.74 8.87c-.12.21-.08.47.12.61l2.03 1.58c-.05.3-.09.63-.09.94s.02.64.07.94l-2.03 1.58c-.18.14-.23.41-.12.61l1.92 3.32c.12.22.37.29.59.22l2.39-.96c.5.38 1.03.7 1.62.94l.36 2.54c.05.24.24.41.48.41h3.84c.24 0 .44-.17.47-.41l.36-2.54c.59-.24 1.13-.56 1.62-.94l2.39.96c.22.08.47 0 .59-.22l1.92-3.32c.12-.22.07-.47-.12-.61l-2.01-1.58zM12 15.6c-1.98 0-3.6-1.62-3.6-3.6s1.62-3.6 3.6-3.6 3.6 1.62 3.6 3.6-1.62 3.6-3.6 3.6z" fill="#fff"/></g>
<g transform="translate(104.68,2378.33) scale(1.8389,1.9333)"><path d="M10.01 21.01c0 1.1.89 1.99 1.99 1.99s1.99-.89 1.99-1.99h-3.98zm8.87-4.19V11c0-3.25-2.25-5.97-5.29-6.69v-.72C13.59 2.71 12.88 2 12 2s-1.59.71-1.59 1.59v.72C7.37 5.03 5.12 7.75 5.12 11v5.82L3 18.94V20h18v-1.06l-2.12-2.12zM13 16h-2v-2h2v2zm0-4h-2V8h2v4z" fill="#fff"/></g>
<circle cx="115.9" cy="2510.5" r="10.3" fill="#fff"/><circle cx="137.6" cy="2510.6" r="10.3" fill="#fff"/><polygon points="126.4,2494.5 126.4,2513.4 117.8,2502.0" fill="#fff"/><polygon points="127.3,2526.5 127.3,2507.4 135.8,2519.1" fill="#fff"/>
<g transform="translate(101.90,2594.40) scale(2.0500,2.0500)"><path d="M12 2C6.48 2 2 6.48 2 12s4.48 10 10 10 10-4.48 10-10S17.52 2 12 2zm1 17h-2v-2h2v2zm2.07-7.75l-.9.92C13.45 12.9 13 13.5 13 15h-2v-.5c0-1.1.45-2.1 1.17-2.83l1.24-1.26c.37-.36.59-.86.59-1.41 0-1.1-.9-2-2-2s-2 .9-2 2H8c0-2.21 1.79-4 4-4s4 1.79 4 4c0 .88-.36 1.68-.93 2.25z" fill="#fff"/></g>
<defs><clipPath id="avc"><circle cx="126.4" cy="2727.8" r="48.9"/></clipPath><filter id="avb" x="-10%" y="-10%" width="120%" height="120%"><feGaussianBlur stdDeviation="1.3"/></filter></defs><g clip-path="url(#avc)"><g filter="url(#avb)"><rect x="70" y="2672" width="114" height="112" fill="#9c8780"/><polygon points="132.0,2675.3 183.4,2675.3 183.4,2748.7 167.2,2741.4 161.4,2709.1 146.7,2690.0" fill="#b3afbb"/><polygon points="163.6,2699.5 171.6,2706.2 173.9,2734.0 168.7,2752.4 168.0,2726.7" fill="#efedf3"/><polygon points="121.8,2690.0 139.4,2687.1 152.6,2695.9 162.8,2713.5 168.0,2734.0 165.0,2754.6 155.5,2766.3 145.2,2775.9 139.4,2763.4 146.7,2752.4 149.6,2726.7 140.8,2709.1 129.1,2698.8" fill="#d69c6e"/><polygon points="139.4,2692.2 152.6,2703.2 160.6,2723.8 161.4,2741.4 156.2,2728.2 148.2,2709.1" fill="#edc4a4"/><polygon points="146.7,2750.2 156.2,2741.4 161.4,2752.4 156.2,2765.6 145.2,2778.1 132.0,2778.1 136.4,2763.4" fill="#4a3430"/><polygon points="150.4,2725.2 156.2,2731.1 157.0,2745.0 148.9,2752.4" fill="#2a1c1e"/><polygon points="117.4,2702.5 132.0,2699.5 143.8,2709.1 149.6,2723.8 146.7,2741.4 137.9,2758.2 134.2,2765.6 132.0,2778.1 120.3,2778.1 124.0,2758.2 117.4,2742.8 110.8,2726.7 111.5,2712.0" fill="#c8875c"/><polygon points="123.2,2704.7 132.0,2704.7 129.8,2719.4 128.4,2732.6 121.8,2723.8 120.3,2712.0" fill="#e3ae86"/><polygon points="130.6,2747.2 142.3,2741.4 139.4,2756.0 132.0,2763.4" fill="#e3ae86"/><ellipse cx="140.1" cy="2726.0" rx="4.2" ry="6.2" fill="#f1dfd8"/><ellipse cx="137.9" cy="2742.1" rx="3.6" ry="3" fill="#f1dfd8"/><polygon points="119.6,2734.0 139.4,2733.3 133.5,2738.4 124.7,2738.4" fill="#5a3426"/><polygon points="113.0,2718.6 124.7,2719.4 124.7,2721.6 113.7,2721.6" fill="#3a2420"/><polygon points="133.5,2717.2 142.3,2715.7 142.3,2718.6 134.2,2719.4" fill="#5a3426"/><polygon points="113.0,2692.9 124.7,2690.0 132.0,2695.9 121.8,2699.5 113.7,2709.1 110.0,2726.7 116.6,2742.8 124.0,2758.2 121.8,2778.1 107.1,2772.2 95.3,2763.4 99.7,2734.0 104.2,2709.1" fill="#0d0a12"/></g></g>
<polyline points="826.5,104.7 840.4,118.6 854.3,104.7" fill="none" stroke="#111" stroke-width="5.2"/>
<path d="M855.400 1237h25.200M868 1224.400v25.200" stroke="#111" stroke-width="3.4" fill="none"/>
<circle cx="3327.4" cy="107.1" r="12.3" fill="none" stroke="#43424c" stroke-width="4.3"/><path d="M3336.500 116.200L3348 127.500" stroke="#43424c" stroke-width="4.5" stroke-linecap="round"/>
<g transform="translate(1339.61,519.11) scale(1.5786,1.5786)"><path d="M19 6.41L17.59 5 12 10.59 6.41 5 5 6.41 10.59 12 5 17.59 6.41 19 12 13.41 17.59 19 19 17.59 13.41 12z" fill="#111"/></g>
<path d="M1450.300 537h23M1461.800 525.500v23" stroke="#6b3dfb" stroke-width="2.8" fill="none"/>
<g transform="translate(2278.52,517.82) scale(1.7357,1.7357)"><path d="M19 6.41L17.59 5 12 10.59 6.41 5 5 6.41 10.59 12 5 17.59 6.41 19 12 13.41 17.59 19 19 17.59 13.41 12z" fill="#3a1d95"/></g>
<g transform="translate(2551.12,519.10) scale(1.5400,1.5400)"><path d="M7 10l5 5 5-5z" fill="#111"/></g>
<g transform="translate(2811.79,518.30) scale(1.6300,1.6200)"><path d="M7 10l5 5 5-5z" fill="#111"/></g>
<g transform="translate(3081.24,517.70) scale(1.6800,1.6800)"><path d="M7 10l5 5 5-5z" fill="#86848f"/></g>
<rect x="1084.5" y="1521.2" width="2776.3" height="2.6" fill="#e8e6ee"/>
<rect x="1084.5" y="1366.2" width="2776.3" height="2.6" fill="#e8e6ee"/>
<rect x="1084.5" y="1211.0" width="2776.3" height="2.6" fill="#e8e6ee"/>
<rect x="1084.5" y="1056.5" width="2776.3" height="2.6" fill="#e8e6ee"/>
<rect x="1084.5" y="1444.8" width="2776.3" height="2.8" fill="#aaa7b9"/>
<rect x="1084.5" y="1289.6" width="2776.3" height="2.8" fill="#aaa7b9"/>
<rect x="1084.5" y="1132.5" width="2776.3" height="2.8" fill="#aaa7b9"/>
<rect x="1084.5" y="977.8" width="2776.3" height="2.8" fill="#aaa7b9"/>
<clipPath id="cc"><rect x="1084.5" y="900" width="2776.3" height="707.0"/></clipPath>
<path d="M1084.5,1321.8 L1088.7,1319.8 L1202.7,1192.4 L1319.4,1431.0 L1438.6,1474.9 L1558.0,1515.3 L1677.7,1580.3 L1805.0,1531.7 L1926.9,1455.7 L2054.8,1113.6 L2171.2,1189.4 L2290.8,1217.0 L2415.5,1363.3 L2535.0,1577.4 L2655.0,1585.0 L2775.0,1588.0 L2895.0,1590.0 L3015.0,1590.0 L3135.0,1588.0 L3260.0,1582.0 L3384.4,1550.3 L3503.4,1496.2 L3620.0,1428.4 L3744.7,1270.6 L3858.9,1273.5 L3860.8,1273.5 L3860.8,1601.0 L1084.5,1601.0 Z" fill="rgba(124,82,255,0.075)" clip-path="url(#cc)"/><path d="M1084.5,1321.8 L1088.7,1319.8 L1202.7,1192.4 L1319.4,1431.0 L1438.6,1474.9 L1558.0,1515.3 L1677.7,1580.3 L1805.0,1531.7 L1926.9,1455.7 L2054.8,1113.6 L2171.2,1189.4 L2290.8,1217.0 L2415.5,1363.3 L2535.0,1577.4 L2655.0,1585.0 L2775.0,1588.0 L2895.0,1590.0 L3015.0,1590.0 L3135.0,1588.0 L3260.0,1582.0 L3384.4,1550.3 L3503.4,1496.2 L3620.0,1428.4 L3744.7,1270.6 L3858.9,1273.5 L3860.8,1273.5" fill="none" stroke="#cdbdfc" stroke-width="5.5" stroke-linejoin="miter" clip-path="url(#cc)"/>
<path d="M1084.5,1513.8 L1205.2,1506.0 L1325.9,1563.2 L1446.6,1563.2 L1567.3,1581.9 L1688.0,1598.7 L1808.8,1584.7 L1929.5,1581.9 L2050.2,1441.4 L2170.9,1451.5 L2291.6,1485.4 L2412.3,1555.1 L2533.0,1593.5 L2653.7,1594.8 L2774.4,1596.3 L2895.1,1596.3 L3015.8,1596.3 L3136.5,1596.3 L3257.3,1594.8 L3378.0,1588.5 L3498.7,1567.5 L3619.4,1559.0 L3740.1,1499.0 L3860.8,1488.9 L3860.8,1601.0 L1084.5,1601.0 Z" fill="rgba(150,115,250,0.20)" clip-path="url(#cc)"/><path d="M1084.5,1513.8 L1205.2,1506.0 L1325.9,1563.2 L1446.6,1563.2 L1567.3,1581.9 L1688.0,1598.7 L1808.8,1584.7 L1929.5,1581.9 L2050.2,1441.4 L2170.9,1451.5 L2291.6,1485.4 L2412.3,1555.1 L2533.0,1593.5 L2653.7,1594.8 L2774.4,1596.3 L2895.1,1596.3 L3015.8,1596.3 L3136.5,1596.3 L3257.3,1594.8 L3378.0,1588.5 L3498.7,1567.5 L3619.4,1559.0 L3740.1,1499.0 L3860.8,1488.9" fill="none" stroke="#a98efb" stroke-width="5.5" stroke-linejoin="miter" clip-path="url(#cc)"/>
<path d="M1084.5,1566.0 L1205.2,1513.8 L1325.9,1581.9 L1446.6,1595.1 L1567.3,1587.4 L1688.0,1602.6 L1808.8,1594.0 L1929.5,1587.4 L2050.2,1489.2 L2170.9,1528.6 L2291.6,1533.3 L2412.3,1509.1 L2533.0,1594.8 L2653.7,1597.1 L2774.4,1597.9 L2895.1,1597.9 L3015.8,1597.9 L3136.5,1597.9 L3257.3,1598.7 L3378.0,1601.0 L3498.7,1584.7 L3619.4,1577.6 L3740.1,1534.0 L3860.8,1509.1 L3860.8,1601.0 L1084.5,1601.0 Z" fill="rgba(150,115,250,0.30)" clip-path="url(#cc)"/><path d="M1084.5,1566.0 L1205.2,1513.8 L1325.9,1581.9 L1446.6,1595.1 L1567.3,1587.4 L1688.0,1602.6 L1808.8,1594.0 L1929.5,1587.4 L2050.2,1489.2 L2170.9,1528.6 L2291.6,1533.3 L2412.3,1509.1 L2533.0,1594.8 L2653.7,1597.1 L2774.4,1597.9 L2895.1,1597.9 L3015.8,1597.9 L3136.5,1597.9 L3257.3,1598.7 L3378.0,1601.0 L3498.7,1584.7 L3619.4,1577.6 L3740.1,1534.0 L3860.8,1509.1" fill="none" stroke="#a07dfa" stroke-width="5.5" stroke-linejoin="miter" clip-path="url(#cc)"/>
<path d="M1084.5,1537.9 L1205.2,1489.3 L1325.9,1564.4 L1446.6,1570.9 L1567.3,1596.3 L1688.0,1598.7 L1808.8,1576.4 L1929.5,1557.6 L2050.2,1516.5 L2170.9,1539.7 L2291.6,1553.2 L2412.3,1566.0 L2533.0,1596.3 L2653.7,1597.9 L2774.4,1598.7 L2895.1,1598.7 L3015.8,1598.7 L3136.5,1598.7 L3257.3,1597.1 L3378.0,1588.5 L3498.7,1576.9 L3619.4,1564.4 L3740.1,1527.3 L3860.8,1563.6 L3860.8,1601.0 L1084.5,1601.0 Z" fill="rgba(150,115,250,0.32)" clip-path="url(#cc)"/><path d="M1084.5,1537.9 L1205.2,1489.3 L1325.9,1564.4 L1446.6,1570.9 L1567.3,1596.3 L1688.0,1598.7 L1808.8,1576.4 L1929.5,1557.6 L2050.2,1516.5 L2170.9,1539.7 L2291.6,1553.2 L2412.3,1566.0 L2533.0,1596.3 L2653.7,1597.9 L2774.4,1598.7 L2895.1,1598.7 L3015.8,1598.7 L3136.5,1598.7 L3257.3,1597.1 L3378.0,1588.5 L3498.7,1576.9 L3619.4,1564.4 L3740.1,1527.3 L3860.8,1563.6" fill="none" stroke="#7e5bf8" stroke-width="5.5" stroke-linejoin="miter" clip-path="url(#cc)"/>
<path d="M1084.5,1593.6 L1205.2,1579.2 L1325.9,1584.1 L1446.6,1588.5 L1567.3,1591.7 L1688.0,1599.4 L1808.8,1601.8 L1929.5,1584.1 L2050.2,1578.9 L2170.9,1587.0 L2291.6,1578.9 L2412.3,1587.3 L2533.0,1598.7 L2653.7,1599.4 L2774.4,1599.4 L2895.1,1599.4 L3015.8,1599.4 L3136.5,1599.4 L3257.3,1598.7 L3378.0,1594.8 L3498.7,1598.7 L3619.4,1583.9 L3740.1,1587.4 L3860.8,1590.6 L3860.8,1601.0 L1084.5,1601.0 Z" fill="rgba(150,115,250,0.25)" clip-path="url(#cc)"/><path d="M1084.5,1593.6 L1205.2,1579.2 L1325.9,1584.1 L1446.6,1588.5 L1567.3,1591.7 L1688.0,1599.4 L1808.8,1601.8 L1929.5,1584.1 L2050.2,1578.9 L2170.9,1587.0 L2291.6,1578.9 L2412.3,1587.3 L2533.0,1598.7 L2653.7,1599.4 L2774.4,1599.4 L2895.1,1599.4 L3015.8,1599.4 L3136.5,1599.4 L3257.3,1598.7 L3378.0,1594.8 L3498.7,1598.7 L3619.4,1583.9 L3740.1,1587.4 L3860.8,1590.6" fill="none" stroke="#6a49c9" stroke-width="4.6" stroke-linejoin="miter" clip-path="url(#cc)"/>
<rect x="1084.5" y="1599.6" width="2776.3" height="2.7" fill="#3d3654"/>
<circle cx="1088.7" cy="1319.8" r="9.2" fill="#fff" stroke="#8a63fa" stroke-width="6"/>
<circle cx="1202.7" cy="1192.4" r="9.2" fill="#fff" stroke="#8a63fa" stroke-width="6"/>
<circle cx="1319.4" cy="1431" r="9.2" fill="#fff" stroke="#8a63fa" stroke-width="6"/>
<circle cx="1438.6" cy="1474.9" r="9.2" fill="#fff" stroke="#8a63fa" stroke-width="6"/>
<circle cx="1558" cy="1515.3" r="9.2" fill="#fff" stroke="#8a63fa" stroke-width="6"/>
<circle cx="1677.7" cy="1580.3" r="9.2" fill="#fff" stroke="#8a63fa" stroke-width="6"/>
<circle cx="1805" cy="1531.7" r="9.2" fill="#fff" stroke="#8a63fa" stroke-width="6"/>
<circle cx="1926.9" cy="1455.7" r="9.2" fill="#fff" stroke="#8a63fa" stroke-width="6"/>
<circle cx="2054.8" cy="1113.6" r="9.2" fill="#fff" stroke="#8a63fa" stroke-width="6"/>
<circle cx="2171.2" cy="1189.4" r="9.2" fill="#fff" stroke="#8a63fa" stroke-width="6"/>
<circle cx="2290.8" cy="1217" r="9.2" fill="#fff" stroke="#8a63fa" stroke-width="6"/>
<circle cx="2415.5" cy="1363.3" r="9.2" fill="#fff" stroke="#8a63fa" stroke-width="6"/>
<circle cx="2535" cy="1577.4" r="9.2" fill="#fff" stroke="#8a63fa" stroke-width="6"/>
<circle cx="2655" cy="1585" r="9.2" fill="#fff" stroke="#8a63fa" stroke-width="6"/>
<circle cx="2775" cy="1588" r="9.2" fill="#fff" stroke="#8a63fa" stroke-width="6"/>
<circle cx="2895" cy="1590" r="9.2" fill="#fff" stroke="#8a63fa" stroke-width="6"/>
<circle cx="3015" cy="1590" r="9.2" fill="#fff" stroke="#8a63fa" stroke-width="6"/>
<circle cx="3135" cy="1588" r="9.2" fill="#fff" stroke="#8a63fa" stroke-width="6"/>
<circle cx="3260" cy="1582" r="9.2" fill="#fff" stroke="#8a63fa" stroke-width="6"/>
<circle cx="3384.4" cy="1550.3" r="9.2" fill="#fff" stroke="#8a63fa" stroke-width="6"/>
<circle cx="3503.4" cy="1496.2" r="9.2" fill="#fff" stroke="#8a63fa" stroke-width="6"/>
<circle cx="3620" cy="1428.4" r="9.2" fill="#fff" stroke="#8a63fa" stroke-width="6"/>
<circle cx="3744.7" cy="1270.6" r="9.2" fill="#fff" stroke="#8a63fa" stroke-width="6"/>
<circle cx="3858.9" cy="1273.5" r="9.2" fill="#fff" stroke="#8a63fa" stroke-width="6"/>
<rect x="3426" y="1117.7" width="12" height="153" rx="6" fill="#a5a3ad"/>
<circle cx="3580.9" cy="1814.6" r="13.6" fill="#d4c5fb"/>
<circle cx="3580.9" cy="1863.5" r="13.6" fill="#a98efb"/>
<circle cx="3580.9" cy="1912.5" r="13.6" fill="#8b68f7"/>
<circle cx="3580.9" cy="1961.4" r="13.6" fill="#6b3dfb"/>
<circle cx="3580.9" cy="2010.4" r="13.6" fill="#3a1d95"/>
<polyline points="2768.0,2352.0 2778.0,2362.0 2788.0,2352.0" fill="none" stroke="#111" stroke-width="3.5"/>
<polyline points="3449.0,2035.0 3459.0,2045.0 3469.0,2035.0" fill="none" stroke="#111" stroke-width="3.5"/>
<polyline points="3449.0,2140.5 3459.0,2150.5 3469.0,2140.5" fill="none" stroke="#111" stroke-width="3.5"/>
<polyline points="3449.0,2246.5 3459.0,2256.5 3469.0,2246.5" fill="none" stroke="#111" stroke-width="3.5"/></svg>
<div style="position:absolute;left:2630.5px;top:602.8px;width:743.8px;height:1260.2px;background:#fff;border-radius:34px;box-shadow:0 5px 24px rgba(30,20,60,.13),0 0 12px rgba(40,25,80,.20)"></div>
<div style="position:absolute;left:2674.2px;top:660.1px;width:656.5px;height:99.7px;box-sizing:border-box;border:1.8px solid #1b1b1f;border-radius:11px;background:#fff"></div>
<div style="position:absolute;left:2674.2px;top:788.4px;width:656.5px;height:99.3px;box-sizing:border-box;border:1.8px solid #3c3a48;border-radius:11px;background:#dcefff"></div>
<span style="position:absolute;left:2791.0px;top:821.5px;font-size:36px;line-height:36px;white-space:pre;color:#0d0d0f;letter-spacing:0.76px;">What appears in this list?</span>
<div style="position:absolute;left:2668.4px;top:1077.7px;width:662.3px;height:78.3px;background:#f1f0f3;border-radius:9px"></div>
<div style="position:absolute;left:2677.5px;top:944.0px;width:44.4px;height:44.4px;box-sizing:border-box;border:2.5px solid #111;border-radius:9px;background:#fff"></div>
<span style="position:absolute;left:2750.4px;top:949.9px;font-size:36px;line-height:36px;white-space:pre;color:#0d0d0f;letter-spacing:0.81px;">Currency</span>
<div style="position:absolute;left:2677.5px;top:1019.5px;width:44.4px;height:44.4px;box-sizing:border-box;border:2.5px solid #111;border-radius:9px;background:#fff"></div>
<span style="position:absolute;left:2750.4px;top:1025.4px;font-size:36px;line-height:36px;white-space:pre;color:#0d0d0f;letter-spacing:0.85px;">Positive Sentiment</span>
<div style="position:absolute;left:2677.5px;top:1095.0px;width:44.4px;height:44.4px;box-sizing:border-box;border:2.5px solid #111;border-radius:9px;background:#f1f0f3"></div>
<span style="position:absolute;left:2750.4px;top:1100.9px;font-size:36px;line-height:36px;white-space:pre;color:#0d0d0f;letter-spacing:1.02px;">Negative Sentiment</span>
<div style="position:absolute;left:2677.5px;top:1170.5px;width:44.4px;height:44.4px;box-sizing:border-box;border:2.5px solid #111;border-radius:9px;background:#fff"></div>
<span style="position:absolute;left:2750.4px;top:1176.4px;font-size:36px;line-height:36px;white-space:pre;color:#0d0d0f;letter-spacing:0.39px;">Call Purpose</span>
<div style="position:absolute;left:2677.5px;top:1246.0px;width:44.4px;height:44.4px;box-sizing:border-box;border:2.5px solid #111;border-radius:9px;background:#fff"></div>
<span style="position:absolute;left:2750.4px;top:1251.9px;font-size:36px;line-height:36px;white-space:pre;color:#0d0d0f;letter-spacing:0.95px;">Action Item</span>
<div style="position:absolute;left:2677.5px;top:1321.5px;width:44.4px;height:44.4px;box-sizing:border-box;border:2.5px solid #111;border-radius:9px;background:#fff"></div>
<span style="position:absolute;left:2750.4px;top:1327.4px;font-size:36px;line-height:36px;white-space:pre;color:#0d0d0f;letter-spacing:0.92px;">Address</span>
<div style="position:absolute;left:2677.5px;top:1397.0px;width:44.4px;height:44.4px;box-sizing:border-box;border:2.5px solid #111;border-radius:9px;background:#fff"></div>
<span style="position:absolute;left:2750.4px;top:1402.9px;font-size:36px;line-height:36px;white-space:pre;color:#0d0d0f;letter-spacing:1.19px;">Support Defective</span>
<div style="position:absolute;left:2679.9px;top:1478.4px;width:637.1px;height:1.8px;background:#c8c6d2"></div>
<span style="position:absolute;left:2750.4px;top:1516.1px;font-size:36px;line-height:36px;white-space:pre;color:#0d0d0f;letter-spacing:0.88px;">Both sides</span>
<span style="position:absolute;left:2750.4px;top:1597.3px;font-size:36px;line-height:36px;white-space:pre;color:#0d0d0f;letter-spacing:1.02px;">Customer</span>
<span style="position:absolute;left:2750.4px;top:1678.0px;font-size:36px;line-height:36px;white-space:pre;color:#0d0d0f;letter-spacing:1.18px;">Agent</span>
<div style="position:absolute;left:3240.3px;top:1769.3px;width:90.0px;height:55.0px;background:#efeef1;border-radius:9px"></div>
<span style="position:absolute;left:3250.9px;top:1782.1px;font-size:28px;line-height:28px;white-space:pre;color:#0d0d0f;letter-spacing:-0.44px;">Apply</span>
<svg style="position:absolute;left:0;top:0" width="3987" height="2876" viewBox="0 0 3987 2876"><circle cx="2711.7" cy="704.6" r="13.7" fill="none" stroke="#86848f" stroke-width="5"/><path d="M2721.800 714.700L2735.800 728.500" stroke="#86848f" stroke-width="5.2" stroke-linecap="round"/>
<circle cx="2731.9" cy="837.8" r="30" fill="#222124"/><rect x="2730.1" y="832.5" width="3.6" height="19.5" fill="#fff"/><circle cx="2731.9" cy="825" r="2.6" fill="#fff"/>
<circle cx="2699.7" cy="1531.2" r="20.2" fill="#fff" stroke="#111" stroke-width="2.6"/>
<circle cx="2699.7" cy="1612.8" r="20.2" fill="#fff" stroke="#111" stroke-width="2.6"/>
<circle cx="2699.7" cy="1693.9" r="20.2" fill="#fff" stroke="#111" stroke-width="2.6"/>
<circle cx="2699.7" cy="1531.2" r="13.6" fill="#7c4dff"/></svg>
</div>
</body></html>
